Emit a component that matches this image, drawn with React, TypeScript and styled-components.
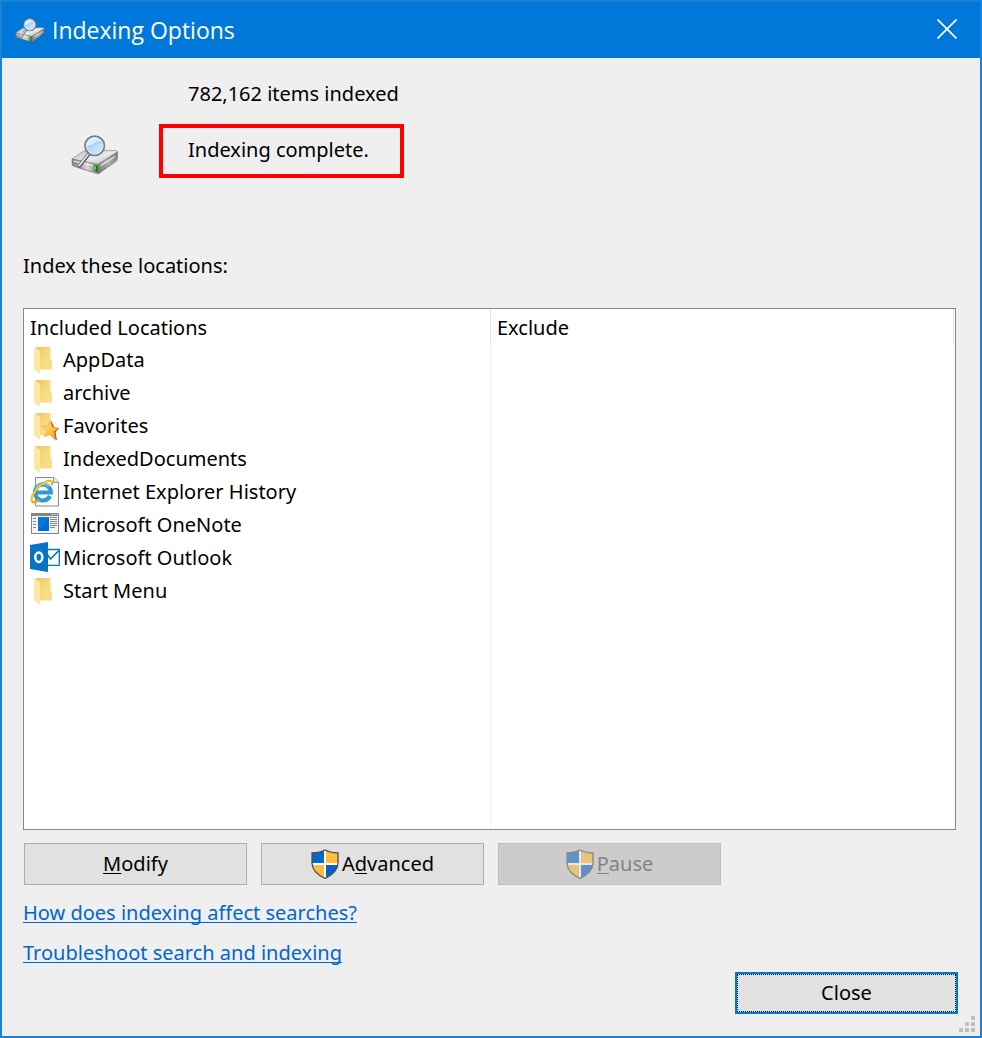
import React from "react";
import styled, { createGlobalStyle } from "styled-components";

const GlobalStyle = createGlobalStyle`
  *, *::before, *::after { box-sizing: border-box; }
  body {
    margin: 0;
    background: #efefef;
    color: #000;
    font: 20px/32px "Noto Sans", "Open Sans", sans-serif;
  }
`;

const Dialog = styled.div`
  position: relative;
  display: flex;
  flex-direction: column;
  min-height: 100vh;
  border: 2px solid #1883d9;
  background: #efefef;
`;

const TitleBar = styled.header`
  display: flex;
  align-items: stretch;
  height: 56px;
  padding-left: 13px;
  background: #0078d9;
  color: #fff;
`;

const Title = styled.h1`
  display: flex;
  flex: 1;
  align-items: center;
  gap: 7px;
  margin: 0;
  font: 400 23px/32px "Open Sans", sans-serif;
`;

const CaptionButton = styled.button`
  display: flex;
  align-items: center;
  justify-content: center;
  width: 66px;
  padding: 0 0 2px;
  border: 0;
  background: transparent;
  color: #fff;
`;

const Content = styled.main`
  display: flex;
  flex: 1;
  flex-direction: column;
  padding: 20px 24px 22px 21px;
`;

const Status = styled.section`
  display: flex;
  align-items: center;
  gap: 40px;
  padding-left: 48px;
`;

const StatusLines = styled.div`
  display: flex;
  flex-direction: column;
  gap: 14px;
`;

const StatusLine = styled.p<{ $marked?: boolean }>`
  width: 245px;
  margin: 0;
  padding: ${(p) => (p.$marked ? "6px 0 8px 25px" : "0 0 0 29px")};
  border: ${(p) => (p.$marked ? "4px solid #ff0000" : "0")};
  line-height: 32px;
  white-space: nowrap;
`;

const DriveBox = styled.div`
  display: flex;
  padding-top: 54px;
`;

const ListLabel = styled.h2`
  margin: 72px 0 26px;
  font: inherit;
`;

const ListBox = styled.div`
  flex: 1;
  padding-right: 1px;
  border: 1px solid #828790;
  background:
    linear-gradient(#edf4fb, #edf4fb) 466px 0 / 1px 100% no-repeat,
    linear-gradient(#f5f9fd, #f5f9fd) calc(100% - 1px) 0 / 1px 100% no-repeat,
    #fff;
`;

const LocationTable = styled.table`
  width: 100%;
  border-collapse: separate;
  border-spacing: 0;
  table-layout: fixed;
`;

const ColumnHead = styled.th<{ $width?: number }>`
  width: ${(p) => (p.$width ? `${p.$width}px` : "auto")};
  height: 35px;
  padding: 2px 6px 0;
  border-right: 1px solid #e3e3e3;
  font-weight: 400;
  line-height: 32px;
  text-align: left;
`;

const Cell = styled.td`
  height: 33px;
  padding: 0 6px;
`;

const Location = styled.div`
  display: flex;
  gap: 3px;
  height: 33px;
  line-height: 32px;
  white-space: nowrap;
`;

const Actions = styled.div`
  display: flex;
  gap: 14px;
  margin: 13px 0 0 1px;
`;

const PushButton = styled.button<{ $focused?: boolean }>`
  display: flex;
  align-items: center;
  justify-content: center;
  gap: 3px;
  width: 223px;
  height: 42px;
  padding: 0;
  border: ${(p) => (p.$focused ? "2px solid #0078d7" : "1px solid #adadad")};
  outline: ${(p) => (p.$focused ? "1px dotted #000" : "none")};
  outline-offset: -3px;
  background: #e1e1e1;
  color: #000;
  font: inherit;

  &:disabled {
    border-color: #bfbfbf;
    background: #cccccc;
    color: #838383;
  }
  &:disabled svg { opacity: 0.55; }
  u {
    text-decoration-thickness: 1px;
    text-underline-offset: 2px;
  }
`;

const Links = styled.nav`
  display: flex;
  flex-direction: column;
  align-items: flex-start;
  gap: 8px;
  margin-top: 12px;
`;

const HelpLink = styled.a`
  color: #0066cc;
  text-decoration-thickness: 1px;
  text-decoration-skip-ink: none;
  text-underline-offset: 2px;
`;

const Footer = styled.footer`
  display: flex;
  justify-content: flex-end;
  margin: 3px -2px 0 0;
`;

const Grip = styled.svg`
  position: absolute;
  right: 5px;
  bottom: 4px;
`;

function DriveIcon({ width, height, id }: { width: number; height: number; id: string }) {
  return (
    <svg width={width} height={height} viewBox="0 0 48 40" aria-hidden="true">
      <defs>
        <linearGradient id={`${id}-top`} x1="0" y1="0" x2="1" y2="1">
          <stop offset="0" stopColor="#b9b9b9" />
          <stop offset="0.5" stopColor="#ececec" />
          <stop offset="1" stopColor="#b0b0b0" />
        </linearGradient>
        <linearGradient id={`${id}-front`} x1="0" y1="0" x2="1" y2="0">
          <stop offset="0" stopColor="#808080" />
          <stop offset="0.6" stopColor="#dadada" />
          <stop offset="1" stopColor="#808080" />
        </linearGradient>
        <linearGradient id={`${id}-side`} x1="0" y1="1" x2="1" y2="0">
          <stop offset="0" stopColor="#6e6e6e" />
          <stop offset="0.5" stopColor="#b0b0b0" />
          <stop offset="1" stopColor="#777" />
        </linearGradient>
        <linearGradient id={`${id}-lens`} x1="0" y1="0" x2="1" y2="1">
          <stop offset="0" stopColor="#e6f3fd" />
          <stop offset="0.45" stopColor="#b3d9fa" />
          <stop offset="1" stopColor="#d8edfd" />
        </linearGradient>
      </defs>
      <path d="M3 32L27 39.5L47 26L46 23L26 36Z" fill="#000" opacity="0.22" />
      <path d="M1 24L12 16.500Q13 16 15 16L44 15.500Q46.500 15.500 46.500 17L27 29.500Z" fill={`url(#${id}-top)`} stroke="#888" strokeWidth="0.7" />
      <path d="M1 24L27 29.500L27 38.500L2 31Q1 30.500 1 29Z" fill={`url(#${id}-front)`} stroke="#707070" strokeWidth="0.6" />
      <path d="M27 29.500L46.500 17V23Q46.500 24 46 24.500L28.500 38Q28 38.500 27 38.500Z" fill={`url(#${id}-side)`} stroke="#707070" strokeWidth="0.6" />
      <path d="M2.500 26L22 30.500M30 30.500L44 21.500" stroke="#f8f8f8" strokeWidth="1.100" opacity="0.85" />
      <path d="M22.800 30L26.500 31V36.800L22.800 35.600Z" fill="#145c17" />
      <path d="M23 30.500L25.200 31.200V35.500L23 34.800Z" fill="#35e321" />
      <path d="M18.500 18L8.500 31" stroke="#666" strokeWidth="3.800" strokeLinecap="round" />
      <path d="M18 18L8.300 30.600" stroke="#e6e6e6" strokeWidth="1.700" strokeLinecap="round" />
      <circle cx="23.700" cy="10.800" r="9.600" fill={`url(#${id}-lens)`} stroke="#737d87" strokeWidth="1.900" />
      <circle cx="23.700" cy="10.800" r="8.400" fill="none" stroke="#e9f5ff" strokeWidth="0.700" />
      <path d="M16 12Q22 10 25 7.500Q28 6 31 7.500Q30 4 26 3Q19 1.500 16 8Z" fill="#fff" opacity="0.4" />
      <path d="M16.500 12Q21 11 24.500 8.500Q27.500 6.500 31 8" fill="none" stroke="#8fc4f2" strokeWidth="0.900" />
    </svg>
  );
}

function FolderIcon({ starred }: { starred?: boolean }) {
  return (
    <svg width="30" height="32" viewBox="0 0 30 32" aria-hidden="true">
      <defs>
        <linearGradient id="folder-back" x1="0" y1="0" x2="1" y2="1">
          <stop offset="0" stopColor="#e9c767" />
          <stop offset="0.450" stopColor="#f6d97c" />
          <stop offset="1" stopColor="#fbdf8b" />
        </linearGradient>
        <linearGradient id="star-fill" x1="0" y1="0" x2="1" y2="1">
          <stop offset="0" stopColor="#ffe9a0" />
          <stop offset="0.500" stopColor="#fdc543" />
          <stop offset="1" stopColor="#f3921d" />
        </linearGradient>
      </defs>
      <path d="M6 3H20.500V15L22 17V25.500H9Z" fill="url(#folder-back)" />
      <path d="M4 3L10 7V30L4 25.500Z" fill="#fee8a4" />
      {starred && (
        <>
          <path d="M21 10.500L24.200 17L29.200 18.300L25.500 22L27 30.500L21 25.500Z" fill="#c9482c" />
          <path d="M19.800 10.500L22.300 17L28.200 18.300L23.800 21.600L25.400 30L20 24.800L14.200 26.500L17 21L12.500 15.500L18 16.500Z" fill="url(#star-fill)" stroke="#e9a23a" strokeWidth="0.600" />
        </>
      )}
    </svg>
  );
}

function ExplorerIcon() {
  return (
    <svg width="30" height="32" viewBox="0 0 30 32" aria-hidden="true">
      <path d="M5.500 1.500H24L28.500 6V30H5.500Z" fill="#fafafa" stroke="#8b8b8b" />
      <path d="M23.500 1.500V6.500H28.500" fill="#e9e9e9" stroke="#8b8b8b" strokeWidth="0.900" />
      <path d="M6 16.500H20.800A7.900 8 0 1 0 20 20" fill="none" stroke="#2d9bd8" strokeWidth="4.200" />
      <path d="M5.500 13.500A7.800 7.800 0 0 1 19 10.500" fill="none" stroke="#7bd0f3" strokeWidth="1.500" />
      <path d="M22 8.500Q22.500 4 18 5Q12 6.500 6 14Q0 22 2.200 25.500Q3.800 27.500 8.500 24.500" fill="none" stroke="#e8a910" strokeWidth="2.200" strokeLinecap="round" />
      <path d="M21.500 7Q21 4.500 17.500 5.500Q11 8 5.500 15Q0.500 22 2.500 25" fill="none" stroke="#fbd642" strokeWidth="1.200" />
    </svg>
  );
}

function OneNoteIcon() {
  return (
    <svg width="30" height="32" viewBox="0 0 30 32" aria-hidden="true">
      <rect x="1.500" y="4.500" width="27" height="20" fill="#f6f6f6" stroke="#868686" />
      <path d="M1 4H29V7H1Z" fill="#868686" />
      <path d="M22 5.500H23M24.500 5.500H25.500M27 5.500H28" stroke="#fff" />
      <rect x="8" y="8" width="11" height="14" fill="#0b78d8" />
      <path d="M8 22L19 8V22Z" fill="#006bd0" />
      <path d="M3 9.500H6M3 12.500H6M3 15.500H6M3 18.500H6M20 8.500H27M20 10.500H27M20 12.500H27M20 14.500H27M20 16.500H27M20 18.500H25" stroke="#858585" />
    </svg>
  );
}

function OutlookIcon() {
  return (
    <svg width="30" height="32" viewBox="0 0 30 32" aria-hidden="true">
      <path d="M17 7.500H29.300V23.300H17Z" fill="#fff" stroke="#0872c6" strokeWidth="1.300" />
      <path d="M17 12L20.500 17L29 8.500" fill="none" stroke="#0872c6" strokeWidth="1.600" />
      <path d="M0 3L18 0V30L0 27Z" fill="#0872c6" />
      <ellipse cx="8.800" cy="15.300" rx="3.500" ry="4.700" fill="none" stroke="#fff" strokeWidth="2.500" />
    </svg>
  );
}

function ShieldIcon() {
  const outline = "M14 1Q9.500 3.500 1 4V14Q1.500 24 14 29.300Q26.500 24 27 14V4Q18.500 3.500 14 1Z";
  return (
    <svg width="28" height="30" viewBox="0 0 28 30" aria-hidden="true">
      <defs>
        <clipPath id="shield-clip">
          <path d={outline} />
        </clipPath>
      </defs>
      <g clipPath="url(#shield-clip)">
        <path d="M0 0H28V30H0Z" fill="#fff" />
        <path d="M0 0H13V14H0Z" fill="#0069c9" />
        <path d="M15 0H28V14H15Z" fill="#ffbd38" />
        <path d="M0 16H13V30H0Z" fill="#ffbd38" />
        <path d="M15 16H28V30H15Z" fill="#0860c4" />
      </g>
      <path d={outline} fill="none" stroke="#4b5052" strokeWidth="1.300" />
    </svg>
  );
}

const locations = [
  { name: "AppData", icon: <FolderIcon /> },
  { name: "archive", icon: <FolderIcon /> },
  { name: "Favorites", icon: <FolderIcon starred /> },
  { name: "IndexedDocuments", icon: <FolderIcon /> },
  { name: "Internet Explorer History", icon: <ExplorerIcon /> },
  { name: "Microsoft OneNote", icon: <OneNoteIcon /> },
  { name: "Microsoft Outlook", icon: <OutlookIcon /> },
  { name: "Start Menu", icon: <FolderIcon /> },
];

export default function App() {
  return (
    <>
      <GlobalStyle />
      <Dialog role="dialog" aria-labelledby="dialog-title">
        <TitleBar>
          <Title id="dialog-title">
            <DriveIcon width={30} height={25} id="caption" />
            Indexing Options
          </Title>
          <CaptionButton type="button" aria-label="Close window">
            <svg width="20" height="20" viewBox="0 0 20 20" aria-hidden="true">
              <path d="M0.500 0.500L19.500 19.500M19.500 0.500L0.500 19.500" stroke="currentColor" strokeWidth="1.700" />
            </svg>
          </CaptionButton>
        </TitleBar>
        <Content>
          <Status>
            <DriveBox>
              <DriveIcon width={48} height={40} id="status" />
            </DriveBox>
            <StatusLines>
              <StatusLine>782,162 items indexed</StatusLine>
              <StatusLine $marked>Indexing complete.</StatusLine>
            </StatusLines>
          </Status>
          <ListLabel id="list-label">Index these locations:</ListLabel>
          <ListBox>
            <LocationTable aria-labelledby="list-label">
              <thead>
                <tr>
                  <ColumnHead scope="col" $width={467}>Included Locations</ColumnHead>
                  <ColumnHead scope="col">Exclude</ColumnHead>
                </tr>
              </thead>
              <tbody>
                {locations.map((location) => (
                  <tr key={location.name}>
                    <Cell>
                      <Location>
                        {location.icon}
                        {location.name}
                      </Location>
                    </Cell>
                    <Cell />
                  </tr>
                ))}
              </tbody>
            </LocationTable>
          </ListBox>
          <Actions>
            <PushButton type="button"><span><u>M</u>odify</span></PushButton>
            <PushButton type="button"><ShieldIcon /><span>A<u>d</u>vanced</span></PushButton>
            <PushButton type="button" disabled><ShieldIcon /><span><u>P</u>ause</span></PushButton>
          </Actions>
          <Links>
            <HelpLink href="#indexing">How does indexing affect searches?</HelpLink>
            <HelpLink href="#troubleshoot">Troubleshoot search and indexing</HelpLink>
          </Links>
          <Footer>
            <PushButton type="button" $focused>Close</PushButton>
          </Footer>
        </Content>
        <Grip width="16" height="16" viewBox="0 0 16 16" aria-hidden="true">
          <path d="M12 0h4v4h-4zM6 6h4v4h-4zM12 6h4v4h-4zM0 12h4v4h-4zM6 12h4v4h-4zM12 12h4v4h-4z" fill="#bfbfbf" />
        </Grip>
      </Dialog>
    </>
  );
}
